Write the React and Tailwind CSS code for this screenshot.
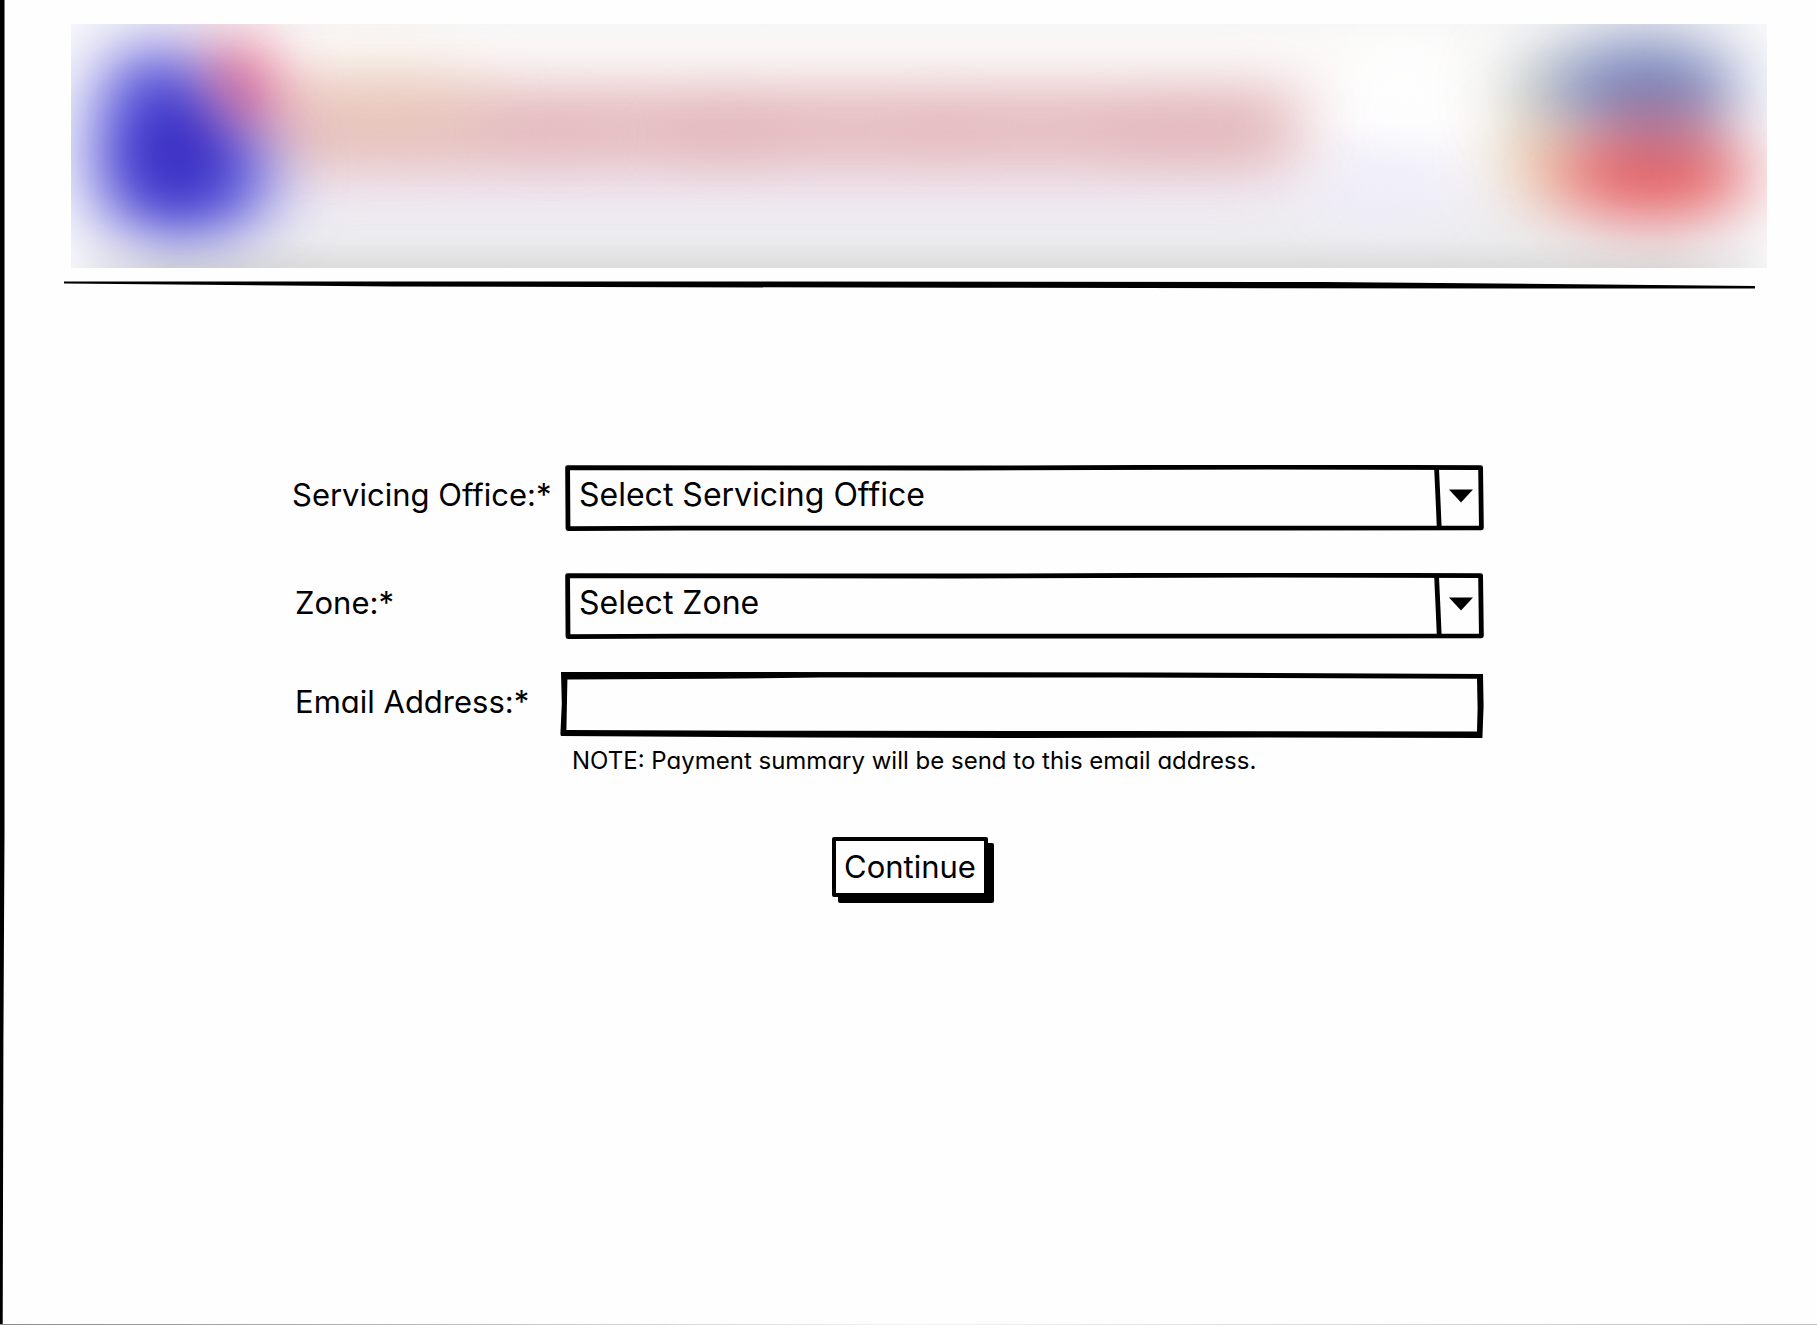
import React from 'react';

const LABEL = 'text-[31px] leading-10 whitespace-nowrap';

/* Blurred artwork of the masthead. */
function Banner() {
  return (
    <svg
      className="block h-[244px] w-full"
      viewBox="0 0 1696 244"
      preserveAspectRatio="none"
      role="img"
      aria-label="Organisation banner"
      colorInterpolationFilters="sRGB"
    >
      <defs>
        <linearGradient id="paper" x1="0" y1="0" x2="0" y2="1">
          <stop offset="0" stopColor="#f7f7f7" />
          <stop offset="0.08" stopColor="#fbfaf9" />
          <stop offset="0.4" stopColor="#fefdfd" />
          <stop offset="0.72" stopColor="#f1f0f6" />
          <stop offset="0.88" stopColor="#ececef" />
          <stop offset="1" stopColor="#dcdcdc" />
        </linearGradient>
        <linearGradient id="edge" x1="0" y1="0" x2="1" y2="0">
          <stop offset="0" stopColor="#f8f8fc" stopOpacity="0.9" />
          <stop offset="0.02" stopColor="#f8f8fc" stopOpacity="0.5" />
          <stop offset="0.06" stopColor="#f8f8fc" stopOpacity="0" />
          <stop offset="0.94" stopColor="#fafafc" stopOpacity="0" />
          <stop offset="0.98" stopColor="#fafafc" stopOpacity="0.4" />
          <stop offset="1" stopColor="#fafafc" stopOpacity="0.8" />
        </linearGradient>
        <filter id="soft18" x="-200%" y="-200%" width="500%" height="500%">
          <feGaussianBlur stdDeviation="26" />
        </filter>
        <filter id="soft24" x="-200%" y="-200%" width="500%" height="500%">
          <feGaussianBlur stdDeviation="32" />
        </filter>
        <filter id="mark" x="-200%" y="-200%" width="500%" height="500%">
          <feGaussianBlur stdDeviation="34 30" />
        </filter>
        <filter id="strip" x="-15%" y="-150%" width="130%" height="400%">
          <feGaussianBlur stdDeviation="34 27" />
        </filter>
      </defs>
      <rect width="1696" height="244" fill="url(#paper)" />
      <rect width="1696" height="244" fill="url(#edge)" />
      <ellipse cx="1310" cy="156" rx="60" ry="30" fill="#ebe9fd" opacity="0.8" filter="url(#soft24)" />
      <ellipse cx="1330" cy="60" rx="50" ry="40" fill="#ffffff" filter="url(#soft24)" />

      <rect x="220" y="136" width="1000" height="36" fill="#e2d0ea" opacity="0.4" filter="url(#strip)" />
      <rect x="200" y="60" width="1030" height="86" fill="#e0b0b4" opacity="0.84" filter="url(#strip)" />
      <ellipse cx="480" cy="110" rx="60" ry="18" fill="#d9a6b2" opacity="0.2" filter="url(#soft18)" />
      <ellipse cx="655" cy="110" rx="70" ry="20" fill="#d9a6b2" opacity="0.3" filter="url(#soft18)" />
      <ellipse cx="872" cy="106" rx="40" ry="18" fill="#dca6aa" opacity="0.2" filter="url(#soft18)" />
      <ellipse cx="1110" cy="110" rx="90" ry="20" fill="#d9a6ac" opacity="0.3" filter="url(#soft18)" />
      <ellipse cx="310" cy="80" rx="110" ry="34" fill="#ecd0b4" opacity="0.55" filter="url(#soft24)" />

      <ellipse cx="166" cy="66" rx="42" ry="52" fill="#e0305c" opacity="0.62" filter="url(#soft24)" />
      <path
        d="M50 32C80 6 124 24 144 68C174 108 216 124 196 178C174 222 52 226 30 178C16 132 22 66 50 32Z"
        fill="#514ed8"
        filter="url(#mark)"
      />
      <ellipse cx="106" cy="128" rx="44" ry="50" fill="#3424bc" opacity="0.75" filter="url(#soft18)" />
      <ellipse cx="162" cy="72" rx="18" ry="36" fill="#d85a8c" opacity="0.6" filter="url(#soft18)" />

      <ellipse cx="1478" cy="70" rx="48" ry="44" fill="#a9b8b8" opacity="0.6" filter="url(#soft24)" />
      <ellipse cx="1476" cy="134" rx="50" ry="50" fill="#e8c090" opacity="0.6" filter="url(#soft24)" />
      <ellipse cx="1576" cy="64" rx="92" ry="52" fill="#6a78b4" opacity="0.88" filter="url(#mark)" />
      <ellipse cx="1582" cy="150" rx="98" ry="46" fill="#e85454" opacity="0.9" filter="url(#mark)" />
      <ellipse cx="1588" cy="106" rx="60" ry="28" fill="#8e487c" opacity="0.42" filter="url(#soft18)" />
    </svg>
  );
}

function SketchRule() {
  return (
    <svg className="block h-2 w-full" viewBox="0 0 1691 8" preserveAspectRatio="none" aria-hidden="true">
      <path d="M0 0.5H700L1260 1L1691 5V7.5H1500L900 6.8L330 5.6L0 2.5Z" fill="#000" />
    </svg>
  );
}

/* Hand-drawn outline of a drop-down, stretched over its select. */
function SketchSelect({ id, placeholder }) {
  return (
    <div className="relative ml-[5px] h-[66px]">
      <select
        id={id}
        className="block h-full w-full appearance-none bg-transparent pr-14 pl-[14px] pb-[6px] text-[32px] leading-10 text-black"
      >
        <option>{placeholder}</option>
      </select>
      <svg
        className="pointer-events-none absolute inset-0 h-full w-full"
        viewBox="0 0 919 66"
        preserveAspectRatio="none"
        aria-hidden="true"
      >
        <g fill="none" stroke="#000" strokeWidth="4.8" strokeLinejoin="round" strokeLinecap="round">
          <path d="M2.6 2.6L390 3L700 2L915.6 2.6L916.4 62.8L700 63.2L120 63.2L3 63.6Z" />
          <path d="M871.6 4L873 34L874.2 62" />
        </g>
        <path d="M884 24.5H908L896 37.5Z" fill="#000" />
      </svg>
    </div>
  );
}

export default function App() {
  return (
    <div className="relative min-h-screen overflow-hidden bg-[#fefefe] font-['Inter','Liberation_Sans',sans-serif] text-black [font-feature-settings:'cv11']">
      <svg
        className="pointer-events-none absolute inset-y-0 left-0 h-full w-[5px]"
        viewBox="0 0 5 1325"
        preserveAspectRatio="none"
        aria-hidden="true"
      >
        <path d="M0 0H4.5V834L3.4 1044L2.7 1325H0Z" fill="#000" />
      </svg>
      <div className="absolute inset-x-0 bottom-0 h-px bg-linear-to-r from-[#8c8c8c] via-[#f2f2f2] to-[#c0c0c0]" />

      <header className="pt-6">
        <div className="mr-[50px] ml-[71px]">
          <Banner />
        </div>
        <div className="mt-[13px] mr-[62px] ml-16">
          <SketchRule />
        </div>
      </header>

      <main>
        <form className="mt-44 mr-[333px] ml-[292px]" onSubmit={(e) => e.preventDefault()}>
          <div className="grid grid-cols-[268px_1fr] items-start">
            <label htmlFor="office" className={`${LABEL} pt-[10px]`}>
              Servicing Office:*
            </label>
            <SketchSelect id="office" placeholder="Select Servicing Office" />

            <label htmlFor="zone" className={`${LABEL} mt-[42px] pt-[10px] pl-[3px]`}>
              Zone:*
            </label>
            <div className="mt-[42px]">
              <SketchSelect id="zone" placeholder="Select Zone" />
            </div>

            <label htmlFor="email" className={`${LABEL} mt-[33px] pt-[10px] pl-[3px]`}>
              Email Address:*
            </label>
            <div className="mt-[33px]">
              <div className="relative h-[66px]">
                <input
                  id="email"
                  type="email"
                  aria-describedby="email-note"
                  className="block h-full w-full bg-transparent px-5 text-[32px] outline-none"
                />
                <svg
                  className="pointer-events-none absolute inset-0 h-full w-full"
                  viewBox="0 0 924 66"
                  preserveAspectRatio="none"
                  aria-hidden="true"
                >
                  <path
                    fillRule="evenodd"
                    fill="#000"
                    d="M1 0H180L600 0.4L923 2L923.6 34L922.4 66L700 65.4L450 66L250 65.4L1 64L0.4 62L1.8 32ZM7.4 7.4L150 6.8L260 5.6L560 5.4L917 6.8L917.6 36L917 59.4L560 59L250 58.8L6.4 58Z"
                  />
                </svg>
              </div>
              <p id="email-note" className="mt-[7px] pl-3 text-[24px] leading-8 whitespace-nowrap">
                NOTE: Payment summary will be send to this email address.
              </p>
            </div>
          </div>

          <div className="mt-[60px] flex pl-[540px]">
            <button
              type="submit"
              className="rounded-xs border-4 border-black bg-white px-2 pt-[6px] pb-[6px] text-[31px] leading-10 shadow-[6px_6px_0_0_#000]"
            >
              Continue
            </button>
          </div>
        </form>
      </main>
    </div>
  );
}
